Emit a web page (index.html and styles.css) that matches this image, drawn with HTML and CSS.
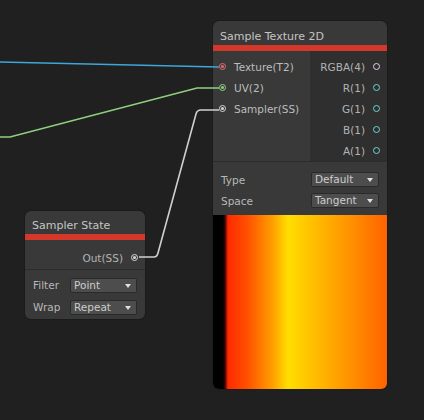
FILE: index.html
```html
<!DOCTYPE html>
<html lang="en">
<head>
    <meta charset="UTF-8">
    <title>Shader Graph</title>
    <link rel="stylesheet" href="styles.css">
</head>
<body>
    <div class="graph">
        <div class="node sample-tex">
            <div class="title">Sample Texture 2D</div>
            <div class="bar"></div>
            <div class="ports">
                <div class="inputs">
                    <div class="port in"><span class="dot red on"></span>Texture(T2)</div>
                    <div class="port in"><span class="dot green on"></span>UV(2)</div>
                    <div class="port in"><span class="dot grey on"></span>Sampler(SS)</div>
                </div>
                <div class="outputs">
                    <div class="port out">RGBA(4)<span class="dot pink"></span></div>
                    <div class="port out">R(1)<span class="dot cyan"></span></div>
                    <div class="port out">G(1)<span class="dot cyan"></span></div>
                    <div class="port out">B(1)<span class="dot cyan"></span></div>
                    <div class="port out">A(1)<span class="dot cyan"></span></div>
                </div>
            </div>
            <div class="settings">
                <div class="field"><span class="label">Type</span><span class="dropdown">Default</span></div>
                <div class="field"><span class="label">Space</span><span class="dropdown">Tangent</span></div>
            </div>
            <div class="preview"></div>
        </div>

        <div class="node sampler">
            <div class="title">Sampler State</div>
            <div class="bar"></div>
            <div class="ports single">
                <div class="port out">Out(SS)<span class="dot grey on"></span></div>
            </div>
            <div class="settings">
                <div class="field"><span class="label">Filter</span><span class="dropdown">Point</span></div>
                <div class="field"><span class="label">Wrap</span><span class="dropdown">Repeat</span></div>
            </div>
        </div>

        <!-- edges between ports -->
        <svg class="wires" width="424" height="420" viewBox="0 0 424 420">
            <path d="M0 62 L219 67" stroke="#3ea6da"/>
            <path d="M0 137 L10 137 L197 88 L219 88" stroke="#8fd07e"/>
            <path d="M139 257 L154 257 Q157 257 158 253 L196 114 Q197 110 201 110 L219 110" stroke="#cfcfcf"/>
        </svg>
    </div>
</body>
</html>
```

FILE: styles.css
```css
body {
    margin: 0;
    background: #202020;
    font-family: "DejaVu Sans", Verdana, sans-serif;
    font-size: 10.5px;
    color: #bdbdbd;
}
.graph {
    position: relative;
    width: 424px;
    height: 420px;
    overflow: hidden;
}
.wires {
    position: absolute;
    left: 0;
    top: 0;
    pointer-events: none;
}
.wires path {
    fill: none;
    stroke-width: 1.6;
}

.node {
    position: absolute;
    background: #393939;
    border-radius: 6px;
    box-shadow: 0 0 0 1px #1b1b1b;
    display: flex;
    flex-direction: column;
    overflow: hidden;
}
.node > * {
    flex: none;
}
.sample-tex {
    left: 213px;
    top: 21px;
    width: 174px;
    height: 368px;
}
.sampler {
    left: 25px;
    top: 211px;
    width: 120px;
    height: 108px;
}
.title {
    height: 24px;
    box-sizing: border-box;
    padding: 9px 0 0 7px;
    line-height: 14px;
    font-size: 11px;
    color: #c4c4c4;
}
.sampler .title {
    height: 23px;
    padding-top: 8px;
}
.bar {
    height: 6px;
    background: #d3382a;
}

.ports {
    display: flex;
    height: 111px;
    box-sizing: border-box;
    border-bottom: 1px solid #2c2c2c;
}
.inputs {
    width: 97px;
    padding-top: 5px;
}
.outputs {
    flex: 1;
    background: #2f2f2f;
    padding-top: 5px;
}
.ports.single {
    height: 30px;
    display: block;
    padding: 7px 0 0;
}
.port {
    height: 21px;
    display: flex;
    align-items: center;
}
.port.in {
    padding-left: 6px;
}
.port.in .dot {
    margin-right: 8px;
}
.port.out {
    justify-content: flex-end;
    padding-right: 7px;
    color: #b4b4b4;
}
.port.out .dot {
    margin-left: 8px;
}

.dot {
    width: 5px;
    height: 5px;
    border: 1.5px solid currentColor;
    border-radius: 50%;
    position: relative;
    flex: none;
}
.dot.on::after {
    content: "";
    position: absolute;
    left: 1px;
    top: 1px;
    width: 3px;
    height: 3px;
    border-radius: 50%;
    background: currentColor;
}
.red { color: #e46a6a; }
.green { color: #8fd07e; }
.grey { color: #d6d6d6; }
.pink { color: #e6cde6; }
.cyan { color: #6fd3d3; }

.settings {
    padding: 7px 0 4px;
}
.sampler .settings {
    padding: 4px 0 1px;
}
.field {
    height: 21px;
    display: flex;
    align-items: center;
    padding: 0 8px;
}
.sampler .field {
    height: 22px;
}
.label {
    width: 90px;
    color: #b8b8b8;
}
.sampler .label {
    width: 37px;
}
.dropdown {
    flex: 1;
    height: 13px;
    line-height: 13px;
    background: #4d4d4d;
    border: 1px solid #2a2a2a;
    border-radius: 2px;
    padding-left: 3px;
    color: #cccccc;
    position: relative;
}
.dropdown::after {
    content: "";
    position: absolute;
    right: 5px;
    top: 5px;
    border-left: 3.5px solid transparent;
    border-right: 3.5px solid transparent;
    border-top: 4px solid #e0e0e0;
}

.preview {
    height: 174px;
    margin-top: auto;
    background: linear-gradient(to right,
        #000 0px, #000 10px, #3c0500 12px, #ff2a00 15px,
        #ff5200 35px, #ffa000 60px, #ffde00 75px,
        #ffbf00 100px, #ff9400 135px, #ff6200 174px);
}
```
